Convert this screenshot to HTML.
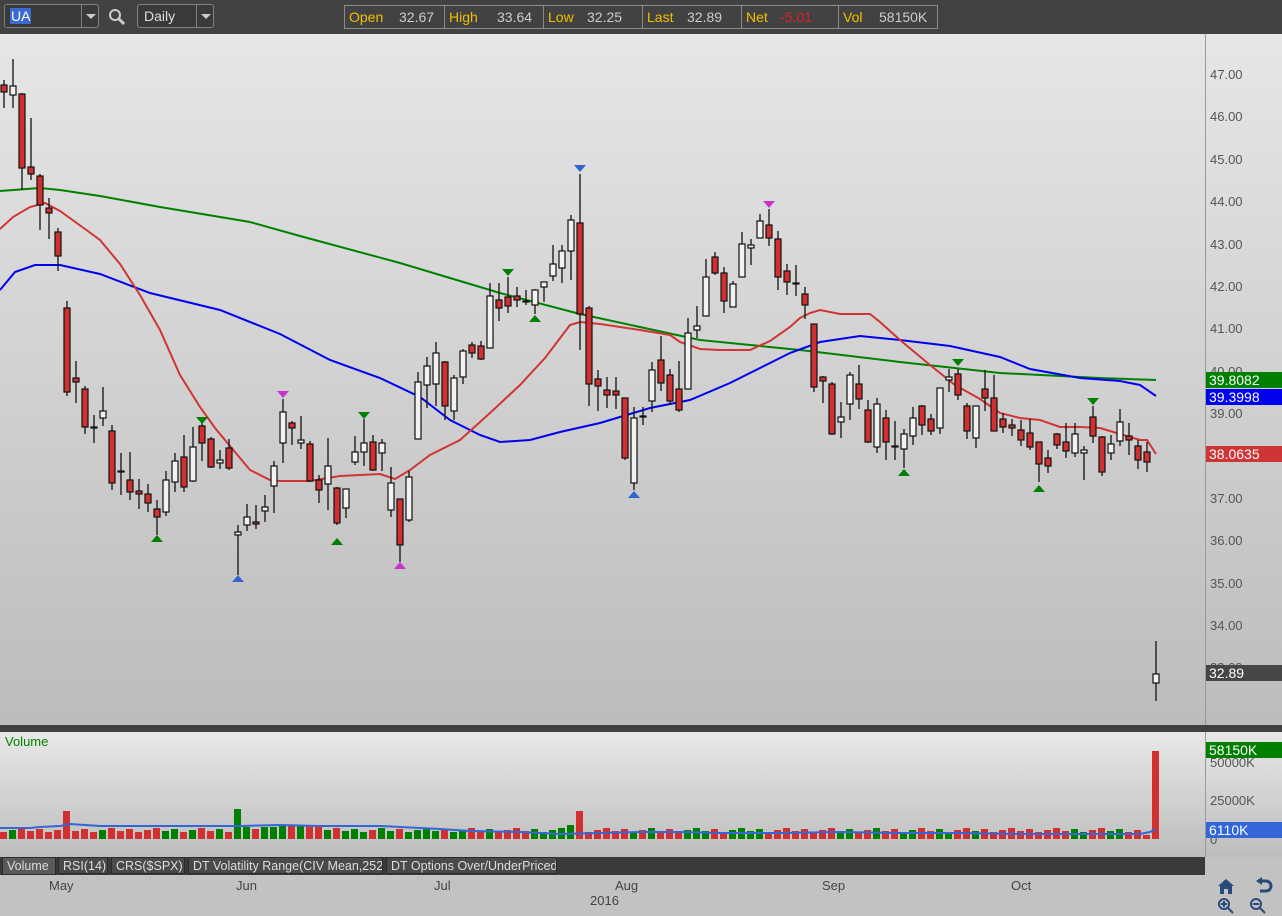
<!DOCTYPE html>
<html><head><meta charset="utf-8">
<style>
*{margin:0;padding:0;box-sizing:border-box}
body{width:1282px;height:916px;overflow:hidden;background:#c2c2c2;font-family:"Liberation Sans",sans-serif;position:relative}
.top{position:absolute;left:0;top:0;width:1282px;height:34px;background:#424242}
.box{position:absolute;border:1px solid #808080;border-radius:3px;height:24px;top:4px;color:#ddd;font-size:14px}
.abs{position:absolute}
.quote{position:absolute;left:344px;top:5px;height:24px;width:594px;border:1px solid #8a8a8a;font-size:14px;display:flex}
.quote div{border-right:1px solid #8a8a8a;display:flex;align-items:center;padding-left:4px;position:relative}
.quote div:last-child{border-right:none}
.y{color:#f0c000}.w{color:#ccc;position:absolute}
.tab{position:absolute;top:857px;height:17px;background:#4a4a4a;color:#ddd;font-size:12.5px;line-height:17px;padding-left:4px;border:1px solid #2a2a2a;white-space:nowrap;overflow:hidden}
.lab{position:absolute;left:1206px;width:76px;height:16px;color:#fff;font-size:14px;line-height:16px;padding-left:3px}
.ax{position:absolute;left:1210px;font-size:13px;color:#555}
.mo{position:absolute;top:878px;font-size:13px;color:#444}
</style></head><body>
<div class="top">
 <div class="box" style="left:4px;width:95px;background:#3a3a3a"><span class="abs" style="left:5px;top:3px;background:#3b6bd0;color:#fff;padding:0 1px;line-height:16px">UA</span><span class="abs" style="left:76px;top:-1px;width:1px;height:24px;background:#808080"></span><span class="abs" style="left:81px;top:9px;border:5px solid transparent;border-top:5px solid #ccc"></span></div>
 <svg class="abs" style="left:108px;top:8px" width="18" height="18"><circle cx="7" cy="7" r="5" fill="none" stroke="#ccc" stroke-width="2"/><path d="M10.5 10.5L16 16" stroke="#ccc" stroke-width="3"/></svg>
 <div class="box" style="left:137px;width:77px;background:#3a3a3a"><span class="abs" style="left:6px;top:3px">Daily</span><span class="abs" style="left:58px;top:-1px;width:1px;height:24px;background:#808080"></span><span class="abs" style="left:63px;top:9px;border:5px solid transparent;border-top:5px solid #ccc"></span></div>
 <div class="quote">
  <div style="width:100px"><span class="y">Open</span><span class="w" style="left:54px">32.67</span></div>
  <div style="width:99px"><span class="y">High</span><span class="w" style="left:52px">33.64</span></div>
  <div style="width:99px"><span class="y">Low</span><span class="w" style="left:43px">32.25</span></div>
  <div style="width:99px"><span class="y">Last</span><span class="w" style="left:44px">32.89</span></div>
  <div style="width:97px"><span class="y">Net</span><span class="w" style="left:38px;color:#e02020">-5.01</span></div>
  <div style="width:98px"><span class="y">Vol</span><span class="w" style="left:40px">58150K</span></div>
 </div>
</div>
<svg id="c" class="abs" style="left:0;top:34px" width="1282" height="882" viewBox="0 34 1282 882">
<defs>
<linearGradient id="g1" x1="0" y1="0" x2="0" y2="1"><stop offset="0" stop-color="#e6e6e6"/><stop offset="1" stop-color="#bcbcbc"/></linearGradient>
<linearGradient id="g2" x1="0" y1="0" x2="0" y2="1"><stop offset="0" stop-color="#e8e8e8"/><stop offset="1" stop-color="#bdbdbd"/></linearGradient>
</defs>
<rect x="0" y="34" width="1282" height="691" fill="url(#g1)"/>
<rect x="0" y="725" width="1282" height="7" fill="#404040"/>
<rect x="0" y="732" width="1282" height="125" fill="url(#g2)"/>
<rect x="0" y="857" width="1282" height="18" fill="#3a3a3a"/>
<rect x="1205" y="34" width="1" height="691" fill="#999"/>
<rect x="1205" y="732" width="1" height="125" fill="#999"/>
<rect x="1205" y="857" width="77" height="18" fill="#c2c2c2"/>
<g id="ma" fill="none" stroke-width="2"></g>
<g id="cd"></g>
<g id="vol"></g>
<text x="5" y="746" font-size="13" fill="#008000" font-family="Liberation Sans">Volume</text>
</svg>
<div class="ax" style="top:67px">47.00</div><div class="ax" style="top:109px">46.00</div><div class="ax" style="top:152px">45.00</div><div class="ax" style="top:194px">44.00</div><div class="ax" style="top:237px">43.00</div><div class="ax" style="top:279px">42.00</div><div class="ax" style="top:321px">41.00</div><div class="ax" style="top:364px">40.00</div><div class="ax" style="top:406px">39.00</div><div class="ax" style="top:491px">37.00</div><div class="ax" style="top:533px">36.00</div><div class="ax" style="top:576px">35.00</div><div class="ax" style="top:618px">34.00</div><div class="ax" style="top:660px">33.00</div>
<div class="ax" style="top:755px">50000K</div><div class="ax" style="top:793px">25000K</div><div class="ax" style="top:832px">0</div>
<div class="lab" style="top:372px;background:#008000">39.8082</div>
<div class="lab" style="top:389px;background:#0000f0">39.3998</div>
<div class="lab" style="top:446px;background:#d03535">38.0635</div>
<div class="lab" style="top:665px;background:#464646">32.89</div>
<div class="lab" style="top:742px;background:#008000">58150K</div>
<div class="lab" style="top:822px;background:#3366d6">6110K</div>
<div class="tab" style="left:2px;width:54px;background:#5a5a5a;height:18px">Volume</div>
<div class="tab" style="left:58px;width:50px">RSI(14)</div>
<div class="tab" style="left:111px;width:74px">CRS($SPX)</div>
<div class="tab" style="left:188px;width:195px">DT Volatility Range(CIV Mean,252)</div>
<div class="tab" style="left:386px;width:171px">DT Options Over/UnderPriced</div>
<div class="mo" style="left:49px">May</div><div class="mo" style="left:236px">Jun</div><div class="mo" style="left:434px">Jul</div><div class="mo" style="left:615px">Aug</div><div class="mo" style="left:822px">Sep</div><div class="mo" style="left:1011px">Oct</div>
<div class="mo" style="left:590px;top:893px">2016</div>
<svg class="abs" style="left:1216px;top:877px" width="60" height="38">
<path d="M10 2L2 9H4V17H8V12H12V17H16V9H18Z" fill="#2a4a7a"/>
<path d="M44 4H50A5 5 0 0 1 50 14H44" fill="none" stroke="#2a4a7a" stroke-width="3"/><path d="M40 4L46 0V8Z" fill="#2a4a7a"/>
<circle cx="8" cy="27" r="5" fill="none" stroke="#2a4a7a" stroke-width="2"/><path d="M12 31L17 36M5 27H11M8 24V30" stroke="#2a4a7a" stroke-width="2"/>
<circle cx="40" cy="27" r="5" fill="none" stroke="#2a4a7a" stroke-width="2"/><path d="M44 31L49 36M37 27H43" stroke="#2a4a7a" stroke-width="2"/>
</svg>
<script>
var NS="http://www.w3.org/2000/svg";
function el(p,t,a){var e=document.createElementNS(NS,t);for(var k in a)e.setAttribute(k,a[k]);p.appendChild(e);return e;}
var C=[[4,80,85,92,108,0],[13,59,86,95,108,1],[22,93,94,168,190,0],[31,118,167,174,180,0],[40,174,176,205,230,0],[49,198,208,213,239,0],[58,228,232,256,271,0],
[67,301,308,392,396,0],[76,361,378,382,403,0],[85,386,389,427,434,0],[94,415,427,428,443,0],[103,387,411,418,426,1],[112,425,431,483,490,0],[121,453,471,472,495,0],[130,452,480,492,500,0],[139,479,491,494,509,0],[148,484,494,503,512,0],[157,500,509,517,535,0],[166,471,480,512,516,1],[175,453,461,482,492,1],[184,435,457,487,492,0],[193,427,447,481,482,1],[202,420,426,443,461,0],[211,437,439,467,468,0],[220,450,460,463,469,1],[229,439,448,468,470,0],[238,525,532,535,575,1],[247,504,517,525,531,1],[256,505,522,524,529,0],[265,495,507,511,522,1],[274,461,466,486,513,1],[283,399,412,443,463,1],[292,421,423,428,445,0],[301,416,440,443,449,1],[310,441,444,481,482,0],[319,475,480,490,503,0],[328,438,466,484,510,1],[337,487,488,523,525,0],[346,489,489,508,518,1],[355,436,452,462,465,1],[364,419,443,452,466,1],[373,435,442,470,471,0],[382,439,443,453,471,1],[391,467,483,510,517,1],[400,500,499,545,562,0],[409,471,477,520,522,1],
[418,372,382,439,439,1],[427,357,366,385,408,1],[436,342,353,384,406,1],[445,361,362,406,420,0],[454,375,378,411,420,1],[463,349,351,377,384,1],[472,342,345,353,358,0],[481,341,346,359,360,0],[490,283,296,348,348,1],[499,283,300,308,321,0],[508,277,297,306,313,0],[517,287,296,300,307,0],[526,290,301,302,305,0],[535,289,290,305,314,1],[544,282,282,287,302,1],[553,245,264,276,281,1],[562,245,251,268,283,1],[571,215,220,251,280,1],[580,174,223,314,350,0],[589,306,308,384,406,0],[598,370,379,386,411,0],[607,377,390,395,408,0],[616,377,391,395,409,0],[625,398,398,458,460,0],[634,407,418,483,490,1],[643,407,416,417,425,0],[652,362,370,401,412,1],[661,336,360,383,391,0],[670,369,375,401,405,0],[679,361,389,410,412,0],[688,318,333,389,389,1],[697,306,326,330,338,1],[706,259,277,316,316,1],[715,252,257,273,275,0],[724,267,273,301,313,0],[733,281,284,307,307,1],[742,232,244,277,277,1],[751,239,245,248,265,1],[760,214,221,238,238,1],[769,209,225,238,246,0],[778,231,239,277,290,0],[787,264,271,282,295,0],[796,265,283,284,296,0],[805,287,294,305,319,0],
[814,324,324,387,392,0],[823,376,377,381,403,0],[832,382,384,434,435,0],[841,402,417,422,438,1],[850,372,375,404,420,1],[859,365,384,399,409,0],[868,400,410,442,443,0],[877,398,404,447,453,1],[886,410,418,442,460,0],[895,421,446,447,460,0],[904,429,434,449,468,1],[913,407,418,436,445,1],[922,405,406,425,435,0],[931,414,419,431,435,0],[940,388,388,428,434,1],[949,369,377,380,392,1],[958,369,374,395,400,0],[967,403,406,431,439,0],[976,406,406,438,448,1],[985,370,389,398,411,0],[994,375,398,431,431,0],[1003,413,419,427,433,0],[1012,419,425,428,436,0],[1021,420,430,440,446,0],[1030,419,433,447,450,0],[1039,442,442,464,482,0],[1048,450,458,466,473,0],[1057,433,434,445,449,0],[1066,423,442,451,458,0],[1075,423,434,453,457,1],[1084,446,450,453,480,1],[1093,406,417,436,443,0],[1102,436,437,472,476,0],[1111,435,444,453,460,1],[1120,409,422,441,446,1],[1129,423,436,440,455,0],[1138,440,446,460,469,0],[1147,442,452,462,472,0],[1156,641,674,683,701,1]];
var cd=document.getElementById('cd');
C.forEach(function(c){var x=c[0];
el(cd,'line',{x1:x,y1:c[1],x2:x,y2:c[4],stroke:'#111','stroke-width':1.3});
var h=Math.max(c[3]-c[2],1);
el(cd,'rect',{x:x-3,y:c[2],width:6,height:h,fill:c[5]?'#f2f2f2':'#d03030',stroke:'#111','stroke-width':1.2});});
var M=[[157,535,0,'#008000'],[202,417,1,'#008000'],[238,575,0,'#3366cc'],[283,391,1,'#cc33cc'],[337,538,0,'#008000'],[364,412,1,'#008000'],[400,562,0,'#cc33cc'],[508,269,1,'#008000'],[535,315,0,'#008000'],[580,165,1,'#3366cc'],[634,491,0,'#3366cc'],[769,201,1,'#cc33cc'],[904,469,0,'#008000'],[958,359,1,'#008000'],[1039,485,0,'#008000'],[1093,398,1,'#008000']];
M.forEach(function(m){var x=m[0],y=m[1];var d=m[2]?'M'+(x-6)+' '+y+'H'+(x+6)+'L'+x+' '+(y+7)+'Z':'M'+(x-6)+' '+(y+7)+'H'+(x+6)+'L'+x+' '+y+'Z';el(cd,'path',{d:d,fill:m[3]});});
var ma=document.getElementById('ma');
function pl(pts,col){el(ma,'polyline',{points:pts,stroke:col});}
pl("0,191 40,188 60,190 100,196 160,207 250,222 300,236 400,263 500,293 580,314 700,340 800,350 900,362 1000,373 1100,378 1156,380","#008000");
pl("0,290 15,272 35,265 60,265 100,274 150,293 220,310 280,334 330,360 380,378 420,397 450,420 480,435 500,442 530,440 560,432 600,423 650,408 690,400 730,383 760,368 790,353 820,342 860,336 900,340 950,346 1000,357 1030,369 1080,378 1120,381 1140,385 1156,396","#0000f0");
pl("0,229 13,217 30,207 45,203 60,211 85,229 100,240 120,264 140,295 160,330 180,375 200,407 215,428 230,446 250,470 270,480 280,481 310,481 340,476 380,474 395,479 410,470 430,455 460,440 490,413 520,385 545,358 570,325 580,322 600,324 640,330 670,335 680,342 700,349 720,350 750,350 770,341 790,327 800,318 810,313 820,310 840,314 870,314 880,322 900,340 930,365 955,385 980,399 1000,413 1020,418 1040,420 1060,427 1080,427 1100,428 1120,434 1140,440 1147,440 1156,454","#d03535");
var vg=document.getElementById('vol');var big={67:28,238:30,580:28,571:14,283:13,292:13,301:13,310:13,319:13,256:10,265:12,274:12,247:12,1147:4,1156:88};
C.forEach(function(c,i){var x=c[0];var h=big[x]||(7+((i*37)%5));el(vg,'rect',{x:x-4,y:839-h,width:7,height:h,fill:(c[5]&&x!=1156)?'#008000':'#d03030'});});
el(vg,'polyline',{points:"0,828 30,828 40,827 60,826 70,824 100,826 150,826 200,826 240,826 280,825 320,826 380,826 420,828 440,829 470,831 520,832 560,834 600,833 640,832 680,832 720,833 780,833 840,832 900,833 960,833 1020,834 1080,834 1140,834 1150,832 1156,829",fill:"none",stroke:"#3366d6","stroke-width":2});
</script>
</body></html>
